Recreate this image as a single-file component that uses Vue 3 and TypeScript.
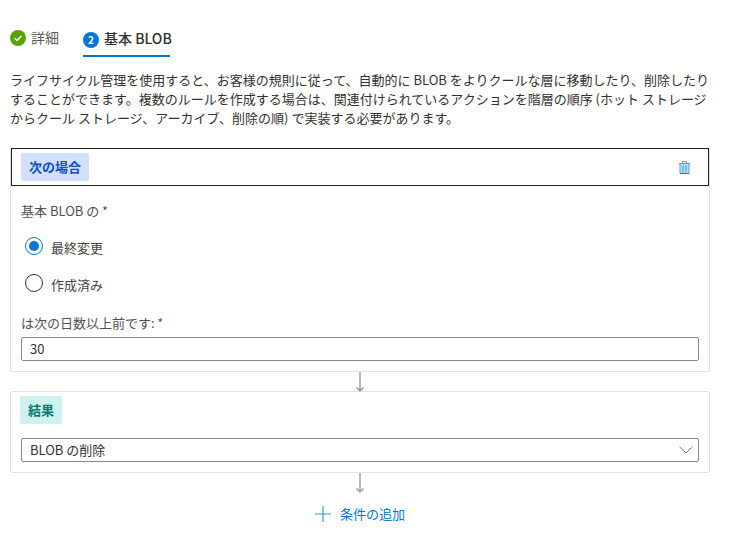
<script setup lang="ts">
const tabs = [
  { label: '詳細', done: true },
  { label: '基本 BLOB', done: false },
]
</script>

<template>
  <main class="page">
    <nav class="tabs">
      <div class="tab done">
        <svg class="step" width="16" height="16" viewBox="0 0 16 16">
          <circle cx="8" cy="8" r="8" fill="#57a300" />
          <path d="M4.6 8.2 7 10.5 11.4 5.9" fill="none" stroke="#fff" stroke-width="1.5" />
        </svg>
        <span>{{ tabs[0].label }}</span>
      </div>
      <div class="tab active">
        <span class="num">2</span>
        <span class="active-label">{{ tabs[1].label }}</span>
      </div>
    </nav>

    <p class="intro">ライフサイクル管理を使用すると、お客様の規則に従って、自動的に BLOB をよりクールな層に移動したり、削除したりすることができます。複数のルールを作成する場合は、関連付けられているアクションを階層の順序 (ホット ストレージからクール ストレージ、アーカイブ、削除の順) で実装する必要があります。</p>

    <section class="card first">
      <header class="if-head">
        <span class="pill blue">次の場合</span>
        <svg class="trash" width="11" height="13" viewBox="0 0 11 13">
          <path d="M1 2.5h9v10H1z" fill="#b5dbf7" stroke="#4ea6ea" stroke-width="1" />
          <path d="M0 2.5h11M3.5 2.5V.5h4v2" fill="none" stroke="#4ea6ea" stroke-width="1" />
          <path d="M4 4.5v6.5M7 4.5v6.5" stroke="#4ea6ea" stroke-width="1.2" />
          <path d="M1 12.5h9" stroke="#0078d4" stroke-width="1" />
        </svg>
      </header>
      <div class="body">
        <label class="field-label">基本 BLOB の <em>*</em></label>
        <div class="radio-row">
          <span class="radio on"></span>
          <span>最終変更</span>
        </div>
        <div class="radio-row second">
          <span class="radio"></span>
          <span>作成済み</span>
        </div>
        <label class="field-label days">は次の日数以上前です: <em>*</em></label>
        <div class="input">30</div>
      </div>
    </section>

    <div class="connector">
      <svg width="10" height="20" viewBox="0 0 10 20">
        <path d="M5 0v19M1.5 15.5 5 19l3.5-3.5" fill="none" stroke="#9a9a9a" stroke-width="1.4" />
      </svg>
    </div>

    <section class="card second-card">
      <span class="pill teal">結果</span>
      <div class="input select">
        <span>BLOB の削除</span>
        <svg width="14" height="8" viewBox="0 0 14 8">
          <path d="M.5.8 7 7 13.5.8" fill="none" stroke="#7a7a7a" stroke-width="1" />
        </svg>
      </div>
    </section>

    <div class="connector">
      <svg width="10" height="20" viewBox="0 0 10 20">
        <path d="M5 0v19M1.5 15.5 5 19l3.5-3.5" fill="none" stroke="#9a9a9a" stroke-width="1.4" />
      </svg>
    </div>

    <div class="add">
      <svg width="16" height="16" viewBox="0 0 16 16">
        <path d="M0 8h16M8 0v16" stroke="#3b98e2" stroke-width="1.2" />
      </svg>
      <span>条件の追加</span>
    </div>
  </main>
</template>

<style>
html, body { margin: 0; background: #fff; }
</style>

<style scoped>
.page {
  width: 735px;
  height: 550px;
  box-sizing: border-box;
  padding: 22px 25px 0 10px;
  font-family: "Noto Sans CJK JP", "Open Sans", sans-serif;
  font-size: 13px;
  line-height: 19px;
  color: #323130;
  overflow: hidden;
}
.tabs { display: flex; gap: 24px; height: 35px; font-size: 14px; }
.tab { display: flex; align-items: flex-start; gap: 5px; color: #605e5c; padding-top: 6px; }
.tab.done { width: 49px; white-space: nowrap; }
.tab.active {
  width: 87px;
  box-sizing: border-box;
  border-bottom: 2px solid #0078d4;
  color: #323130;
  font-weight: 500;
  padding-top: 7px;
  gap: 5px;
  white-space: nowrap;
}
.step { margin-top: 2px; }
.num {
  width: 16px;
  height: 16px;
  margin-top: 3px;
  border-radius: 50%;
  background: #0078d4;
  color: #fff;
  font-size: 10px;
  font-weight: 700;
  line-height: 16px;
  text-align: center;
  flex: none;
}
.intro { margin: 13px 0 0; height: 58px; }
.card {
  border: 1px solid #e3e3e3;
  border-radius: 2px;
  box-sizing: border-box;
}
.first { margin-top: 20px; height: 224px; border-top: 0; }
.if-head {
  height: 38px;
  box-sizing: border-box;
  width: 698px;
  border: 1px solid #1f1f1f;
  padding: 4px 18px 4px 9px;
  display: flex;
  align-items: center;
  justify-content: space-between;
}
.pill {
  display: inline-block;
  height: 28px;
  border-radius: 2px;
  font-weight: 700;
  line-height: 28px;
  box-sizing: border-box;
  white-space: nowrap;
}
.blue { background: #d2e0fd; color: #0f4fc0; padding: 0 8px; width: 68px; }
.teal { background: #cdf2ef; color: #0b7a72; padding: 0 8px; width: 42px; margin-left: -1px; display: block; }
.body { padding: 15px 10px 0; }
.field-label { display: block; color: #505050; }
.field-label em { color: #a4262c; font-style: normal; font-size: 12px; }
.radio-row { display: flex; align-items: center; gap: 8px; margin: 16px 0 0 4px; height: 19px; color: #454545; }
.radio-row > span:last-child { position: relative; top: 2px; }
.radio-row.second { margin-top: 18px; }
.radio {
  width: 18px;
  height: 18px;
  box-sizing: border-box;
  border: 1px solid #323130;
  border-radius: 50%;
  position: relative;
}
.radio.on { border-color: #0078d4; }
.radio.on::after {
  content: "";
  position: absolute;
  inset: 3px;
  border-radius: 50%;
  background: #0078d4;
}
.days { margin-top: 21px; }
.input {
  box-sizing: border-box;
  height: 24px;
  margin-top: 5px;
  border: 1px solid #8a8886;
  border-radius: 2px;
  padding: 0 8px;
  line-height: 22px;
  color: #323130;
}
.connector { height: 19px; display: flex; justify-content: center; }
.connector svg { display: block; }
.second-card { height: 82px; padding: 4px 10px 0 10px; }
.select { display: flex; align-items: center; justify-content: space-between; margin-top: 14px; padding-right: 5px; }
.add {
  display: flex;
  justify-content: center;
  align-items: center;
  gap: 9px;
  margin-top: 12px;
  color: #0078d4;
}
</style>
